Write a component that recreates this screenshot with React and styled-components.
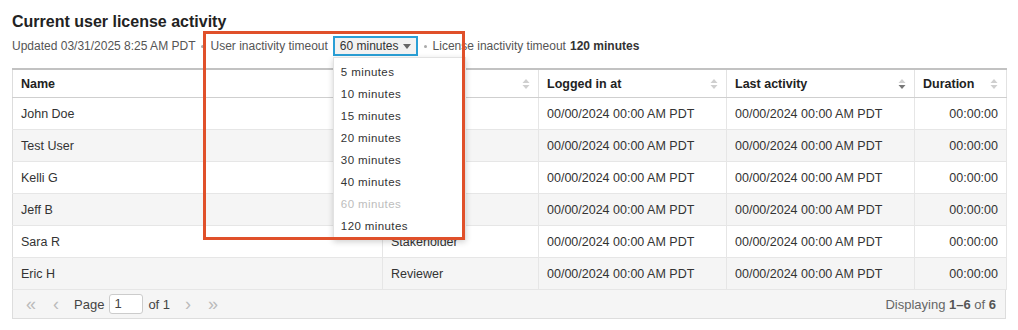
import React from "react";
import styled, { createGlobalStyle } from "styled-components";

const Global = createGlobalStyle`
  body {
    margin: 0;
    background: #fff;
    font-family: "Liberation Sans", Arial, sans-serif;
    color: #333;
  }
`;

const Page = styled.div`
  position: relative;
  padding: 12px 12px 0 12px;
`;

const Title = styled.h2`
  margin: 0;
  font-size: 16px;
  line-height: 20px;
  font-weight: bold;
  color: #222;
`;

const Meta = styled.div`
  display: flex;
  align-items: center;
  height: 20px;
  margin: 4px 0 12px;
  font-size: 12px;
  color: #555;
  white-space: nowrap;
`;

const Dot = styled.span`
  width: 3px;
  height: 3px;
  border-radius: 50%;
  background: #aaa;
  margin: 0 6px;
`;

const TimeoutGroup = styled.div`
  position: relative;
  display: flex;
  align-items: center;
  gap: 5px;
`;

const Highlight = styled.div`
  position: absolute;
  left: -7px;
  top: -5px;
  width: 262px;
  height: 209px;
  border: 3px solid #e0502a;
  box-sizing: border-box;
  pointer-events: none;
  z-index: 3;
`;

const SelectWrap = styled.div`
  position: relative;
`;

const SelectButton = styled.div`
  display: flex;
  align-items: center;
  gap: 4px;
  height: 20px;
  box-sizing: border-box;
  padding: 0 5px;
  border: 2px solid #2a9fd6;
  background: #f2f2f2;
  color: #333;
  font-size: 12px;
  white-space: nowrap;
`;

const Caret = styled.span`
  width: 0;
  height: 0;
  border-left: 4px solid transparent;
  border-right: 4px solid transparent;
  border-top: 5px solid #666;
`;

const Menu = styled.ul`
  position: absolute;
  top: 21px;
  left: 0;
  width: 131px;
  margin: 0;
  padding: 3px 0 2px;
  list-style: none;
  background: #fff;
  border: 1px solid #e2e2e2;
  box-shadow: 0 2px 6px rgba(0, 0, 0, 0.18);
  z-index: 2;
`;

const MenuItem = styled.li`
  height: 22px;
  line-height: 22px;
  padding-left: 7px;
  font-size: 11.5px;
  letter-spacing: 0.4px;
  color: ${({ disabled }) => (disabled ? "#bdbdbd" : "#333")};
`;

const Strong = styled.b`
  color: #333;
  margin-left: 4px;
`;

const Table = styled.table`
  width: 994px;
  table-layout: fixed;
  border-collapse: collapse;
  border: 1px solid #ddd;
  border-top: 2px solid #c2c2c2;
  font-size: 12.5px;
`;

const Th = styled.th`
  height: 27px;
  padding: 0 8px;
  text-align: left;
  font-weight: bold;
  color: #222;
  border-right: 1px solid #e2e2e2;
  border-bottom: 1px solid #cfcfcf;
`;

const ThInner = styled.div`
  display: flex;
  align-items: center;
  justify-content: space-between;
`;

const Row = styled.tr`
  background: ${({ alt }) => (alt ? "#f5f5f5" : "#fff")};
`;

const Td = styled.td`
  height: 31px;
  padding: 0 8px;
  color: #333;
  white-space: nowrap;
  overflow: hidden;
  text-align: ${({ right }) => (right ? "right" : "left")};
  border-right: 1px solid #e6e6e6;
  border-bottom: 1px solid #e6e6e6;
`;

const Footer = styled.div`
  display: flex;
  align-items: center;
  justify-content: space-between;
  width: 994px;
  height: 29px;
  box-sizing: border-box;
  padding: 0 9px 0 8px;
  background: #f5f5f5;
  border: 1px solid #ddd;
  border-top: none;
  font-size: 13px;
  color: #444;
`;

const Pager = styled.div`
  display: flex;
  align-items: center;
`;

const NavGlyph = styled.span`
  color: #bbb;
  font-size: 18px;
  line-height: 20px;
  width: ${({ w }) => w}px;
  margin-left: ${({ gap }) => gap || 0}px;
  text-align: center;
`;

const PagerText = styled.span`
  margin-left: ${({ gap }) => gap}px;
`;

const PageInput = styled.div`
  width: 34px;
  height: 20px;
  margin-left: 5px;
  box-sizing: border-box;
  border: 1px solid #ccc;
  border-radius: 3px;
  background: #fff;
  padding-left: 4px;
  line-height: 18px;
`;

const Displaying = styled.div`
  color: #666;
  b {
    color: #555;
  }
`;

function SortIcon({ active }) {
  return (
    <svg width="8" height="12" viewBox="0 0 8 12">
      <path d="M4 1 L7.5 5 L0.5 5 Z" fill="#cfcfcf" />
      <path d="M4 11 L7.5 7 L0.5 7 Z" fill={active ? "#777" : "#cfcfcf"} />
    </svg>
  );
}

const columns = [
  { label: "Name", width: 370, sort: false },
  { label: "Role", width: 156, sort: true },
  { label: "Logged in at", width: 188, sort: true },
  { label: "Last activity", width: 188, sort: true, active: true },
  { label: "Duration", width: 92, sort: true },
];

const stamp = "00/00/2024 00:00 AM PDT";

const rows = [
  ["John Doe", "Administrator"],
  ["Test User", "Viewer (chat)"],
  ["Kelli G", "Editor (edit)"],
  ["Jeff B", "Editor (edit)"],
  ["Sara R", "Stakeholder"],
  ["Eric H", "Reviewer"],
];

const options = ["5", "10", "15", "20", "30", "40", "60", "120"];

export default function App() {
  return (
    <Page>
      <Global />
      <Title>Current user license activity</Title>
      <Meta>
        Updated 03/31/2025 8:25 AM PDT
        <Dot />
        <TimeoutGroup>
          <Highlight />
          User inactivity timeout
          <SelectWrap>
            <SelectButton>
              60 minutes <Caret />
            </SelectButton>
            <Menu>
              {options.map((o) => (
                <MenuItem key={o} disabled={o === "60"}>
                  {o} minutes
                </MenuItem>
              ))}
            </Menu>
          </SelectWrap>
        </TimeoutGroup>
        <Dot />
        License inactivity timeout<Strong>120 minutes</Strong>
      </Meta>
      <Table>
        <colgroup>
          {columns.map((c) => (
            <col key={c.label} style={{ width: c.width }} />
          ))}
        </colgroup>
        <thead>
          <tr>
            {columns.map((c) => (
              <Th key={c.label}>
                <ThInner>
                  {c.label}
                  {c.sort && <SortIcon active={c.active} />}
                </ThInner>
              </Th>
            ))}
          </tr>
        </thead>
        <tbody>
          {rows.map(([name, role], i) => (
            <Row key={name} alt={i % 2 === 1}>
              <Td>{name}</Td>
              <Td>{role}</Td>
              <Td>{stamp}</Td>
              <Td>{stamp}</Td>
              <Td right>00:00:00</Td>
            </Row>
          ))}
        </tbody>
      </Table>
      <Footer>
        <Pager>
          <NavGlyph w={20}>«</NavGlyph>
          <NavGlyph w={16} gap={7}>‹</NavGlyph>
          <PagerText gap={10}>Page</PagerText>
          <PageInput>1</PageInput>
          <PagerText gap={5}>of 1</PagerText>
          <NavGlyph w={16} gap={10}>›</NavGlyph>
          <NavGlyph w={20} gap={7}>»</NavGlyph>
        </Pager>
        <Displaying>
          Displaying <b>1–6</b> of <b>6</b>
        </Displaying>
      </Footer>
    </Page>
  );
}
